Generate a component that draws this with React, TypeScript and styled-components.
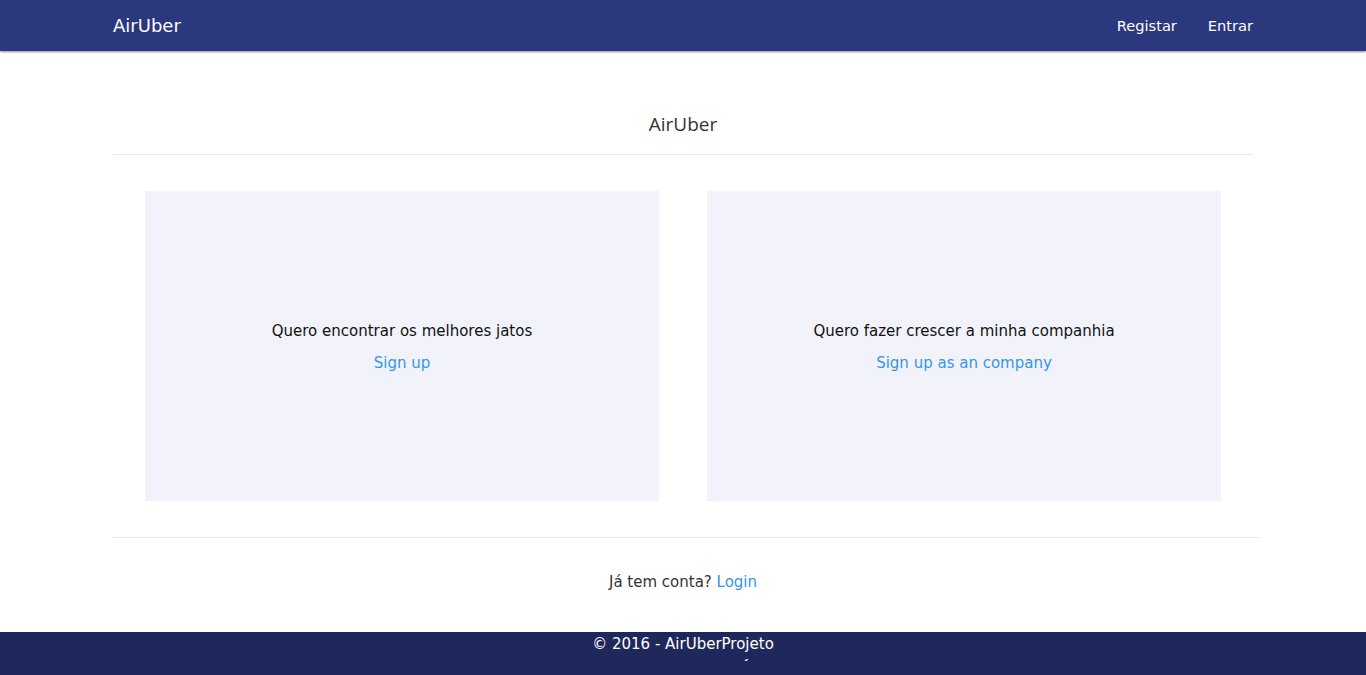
import React from 'react';
import styled, { createGlobalStyle } from 'styled-components';

const GlobalStyle = createGlobalStyle`
  html, body {
    margin: 0;
    padding: 0;
    height: 100%;
  }
  body {
    font-family: "DejaVu Sans", Verdana, sans-serif;
    font-size: 15px;
    color: #333;
    background: #fff;
  }
  #root {
    min-height: 100%;
  }
`;

const Page = styled.div`
  min-height: 100vh;
  display: flex;
  flex-direction: column;
`;

const NavBar = styled.nav`
  height: 51px;
  background: #2c387e;
  box-shadow: 0 1px 2px rgba(0, 0, 0, 0.45);
  position: relative;
  z-index: 1;
`;

const NavInner = styled.div`
  width: 1140px;
  height: 100%;
  margin: 0 auto;
  display: flex;
  align-items: center;
  justify-content: space-between;
`;

const Brand = styled.a`
  color: #fff;
  font-size: 18px;
  text-decoration: none;
`;

const NavLinks = styled.div`
  display: flex;
  gap: 31px;
`;

const NavLink = styled.a`
  color: #fff;
  font-size: 14.6px;
  text-decoration: none;
`;

const Main = styled.main`
  flex: 1;
  width: 1140px;
  margin: 0 auto;
  padding-top: 59px;
`;

const Title = styled.h1`
  margin: 0;
  font-family: "Open Sans", "Noto Sans", sans-serif;
  font-weight: 400;
  font-size: 19px;
  line-height: 28px;
  text-align: center;
  color: #333;
`;

const Rule = styled.hr<{ $extra?: number }>`
  border: 0;
  border-top: 1px solid #e8e8e8;
  margin: 16px 0 0;
  width: ${(p) => 1140 + (p.$extra ?? 0)}px;
`;

const CardRow = styled.div`
  display: grid;
  grid-template-columns: 514px 514px;
  gap: 48px;
  padding: 36px 32px 0;
`;

const Card = styled.div`
  height: 310px;
  background: #f2f3fa;
  display: flex;
  flex-direction: column;
  align-items: center;
  justify-content: center;
  gap: 12px;
  padding-top: 2px;
  box-sizing: border-box;
`;

const CardText = styled.p`
  margin: 0;
  font-size: 15px;
  line-height: 20px;
  color: #111;
`;

const Link = styled.a`
  color: #3595ee;
  font-size: 15px;
  line-height: 20px;
  text-decoration: none;
`;

const BottomRule = styled(Rule)`
  margin-top: 36px;
`;

const LoginLine = styled.p`
  margin: 34px 0 0;
  text-align: center;
  line-height: 20px;
  color: #333;
`;

const Footer = styled.footer`
  height: 43px;
  box-sizing: border-box;
  padding-top: 2px;
  background: #1f285a;
  color: #fff;
  text-align: center;
  font-size: 15px;
  line-height: 20px;
  overflow: hidden;
`;

/* the second copy of the line only peeks out below the first one */
const GhostStrip = styled.div`
  height: 4px;
  margin-top: 5px;
  overflow: hidden;
`;

const GhostText = styled.div`
  margin-top: -16px;
`;

export default function App() {
  return (
    <Page>
      <GlobalStyle />
      <NavBar>
        <NavInner>
          <Brand href="#">AirUber</Brand>
          <NavLinks>
            <NavLink href="#">Registar</NavLink>
            <NavLink href="#">Entrar</NavLink>
          </NavLinks>
        </NavInner>
      </NavBar>
      <Main>
        <Title>AirUber</Title>
        <Rule />
        <CardRow>
          <Card>
            <CardText>Quero encontrar os melhores jatos</CardText>
            <Link href="#">Sign up</Link>
          </Card>
          <Card>
            <CardText>Quero fazer crescer a minha companhia</CardText>
            <Link href="#">Sign up as an company</Link>
          </Card>
        </CardRow>
        <BottomRule $extra={6} />
        <LoginLine>
          Já tem conta? <Link href="#">Login</Link>
        </LoginLine>
      </Main>
      <Footer>
        <div>© 2016 - AirUberProjeto</div>
        <GhostStrip aria-hidden>
          <GhostText>© 2016 - AirUberProjeto</GhostText>
        </GhostStrip>
      </Footer>
    </Page>
  );
}
